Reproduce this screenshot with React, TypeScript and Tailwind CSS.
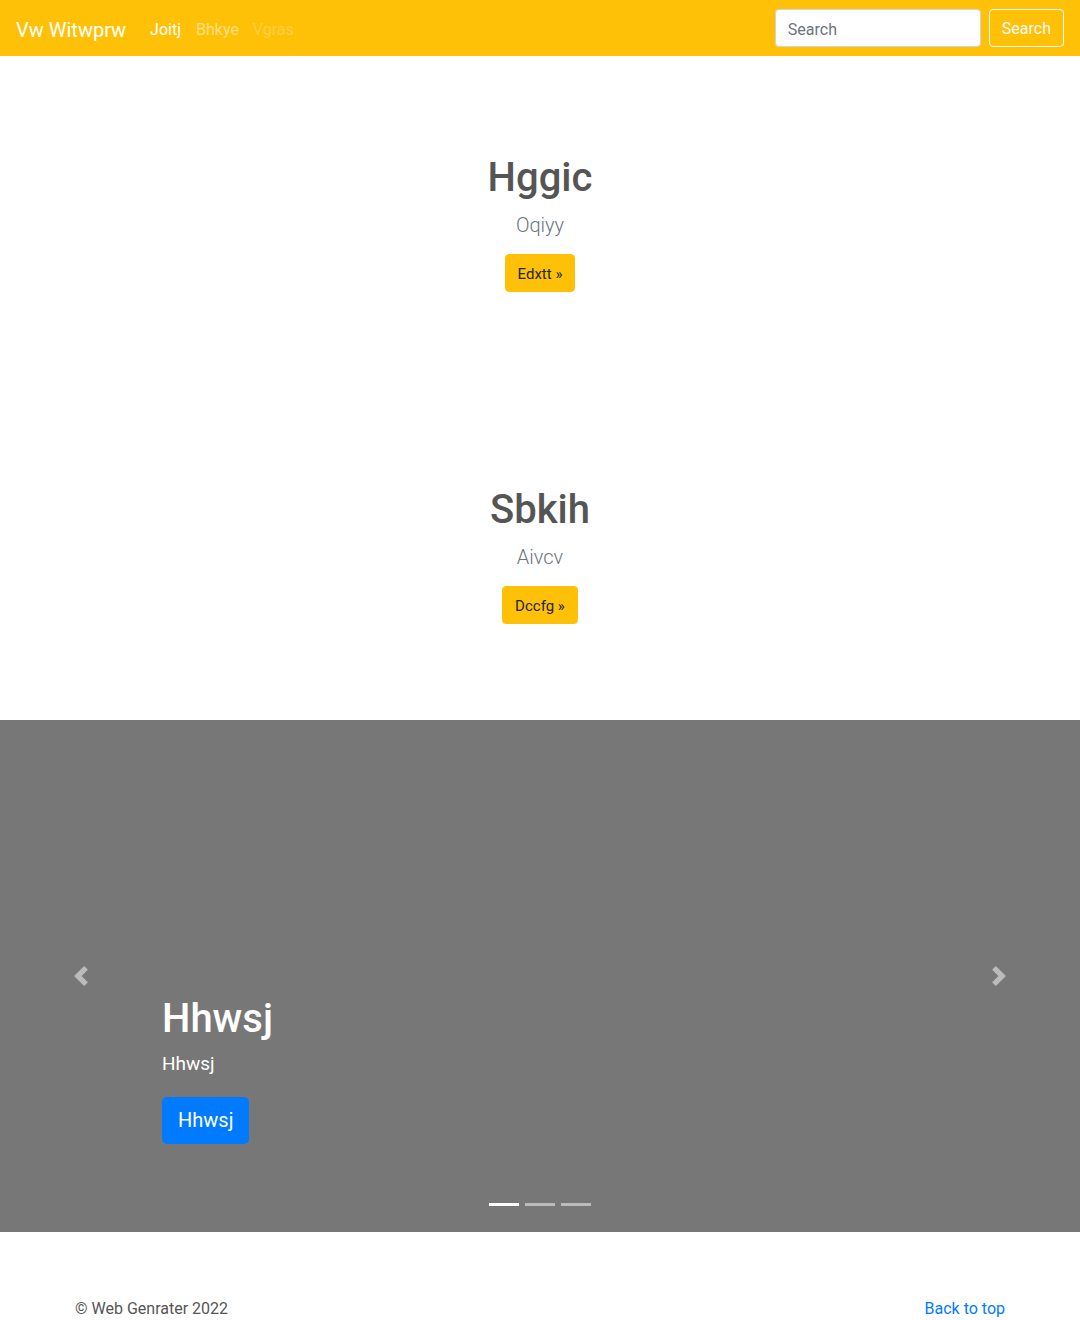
const FONT = "font-['Roboto','Liberation_Sans',sans-serif]";

type Feature = { title: string; lead: string; cta: string };

const FEATURES: Feature[] = [
  { title: "Hggic", lead: "Oqiyy", cta: "Edxtt" },
  { title: "Sbkih", lead: "Aivcv", cta: "Dccfg" },
];

function Chevron({ dir }: { dir: "left" | "right" }) {
  return (
    <svg width="20" height="20" viewBox="0 0 8 8" fill="#fff" className="opacity-50">
      {dir === "left" ? (
        <path d="M5.25 0l-4 4 4 4 1.5-1.5L4.25 4l2.5-2.5L5.25 0z" />
      ) : (
        <path d="M2.75 0l-1.5 1.5L3.75 4l-2.5 2.5L2.75 8l4-4-4-4z" />
      )}
    </svg>
  );
}

function Navbar() {
  return (
    <nav className="flex h-14 items-center bg-[#ffc107] px-4 pt-1">
      <a href="#" className="mr-4 text-[20px] leading-[30px] text-white">
        Vw Witwprw
      </a>
      <ul className="flex items-center">
        <li>
          <a href="#" className="px-2 text-white">Joitj</a>
        </li>
        <li>
          <a href="#" className="px-[7px] text-white/50">Bhkye</a>
        </li>
        <li>
          <span className="px-[7px] text-white/25">Vgras</span>
        </li>
      </ul>
      <form className="-mt-1 ml-auto flex items-center gap-2">
        <input
          placeholder="Search"
          className="h-[38px] w-[206px] rounded border border-[#ced4da] bg-white px-3 pt-[2px] text-base text-[#495057] placeholder:text-[#6c757d] outline-none"
        />
        <button
          type="button"
          className="h-[38px] rounded border border-[#f8f9fa] px-3 pt-[2px] text-base text-[#f8f9fa]"
        >
          Search
        </button>
      </form>
    </nav>
  );
}

function FeatureBlock({ f }: { f: Feature }) {
  return (
    <section className="flex h-[332px] flex-col items-center pt-[98px] text-center">
      <h1 className="mb-2 text-[40px] font-medium leading-[48px] text-[#555]">{f.title}</h1>
      <p className="mb-[14px] text-[20px] font-light leading-[30px] text-[#6c757d]">{f.lead}</p>
      <a
        href="#"
        className="h-[38px] rounded border border-[#ffc107] bg-[#ffc107] px-3 pt-[1px] text-[15px] leading-[36px] text-[#212529]"
      >
        {f.cta} »
      </a>
    </section>
  );
}

function Carousel() {
  return (
    <div className="relative flex h-[512px] items-end bg-[#777]">
      <div className="px-[15%] pb-[88px] text-white">
        <h1 className="mb-2 text-[40px] font-medium leading-[48px]">Hhwsj</h1>
        <p className="mb-5 text-[19px] leading-[26px]">Hhwsj</p>
        <a
          href="#"
          className="inline-block rounded-[5px] bg-[#007bff] px-4 py-2 text-[20px] leading-[31px] text-white"
        >
          Hhwsj
        </a>
      </div>

      <a href="#" className="absolute inset-y-0 left-0 flex w-[15%] items-center justify-center">
        <Chevron dir="left" />
      </a>
      <a href="#" className="absolute inset-y-0 right-0 flex w-[15%] items-center justify-center">
        <Chevron dir="right" />
      </a>

      <ol className="absolute inset-x-0 bottom-[26px] flex justify-center gap-[6px]">
        <li className="h-[3px] w-[30px] bg-white" />
        <li className="h-[3px] w-[30px] bg-white/50" />
        <li className="h-[3px] w-[30px] bg-white/50" />
      </ol>
    </div>
  );
}

export default function App() {
  return (
    <div className={`${FONT} min-h-[1320px] bg-white text-base text-[#212529]`}>
      <Navbar />
      {FEATURES.map((f) => (
        <FeatureBlock key={f.title} f={f} />
      ))}
      <Carousel />
      <footer className="mx-auto flex w-[960px] justify-between px-[15px] pt-[65px] text-base leading-6">
        <p className="text-[#555]">© Web Genrater 2022</p>
        <a href="#" className="text-[#007bff]">Back to top</a>
      </footer>
    </div>
  );
}
